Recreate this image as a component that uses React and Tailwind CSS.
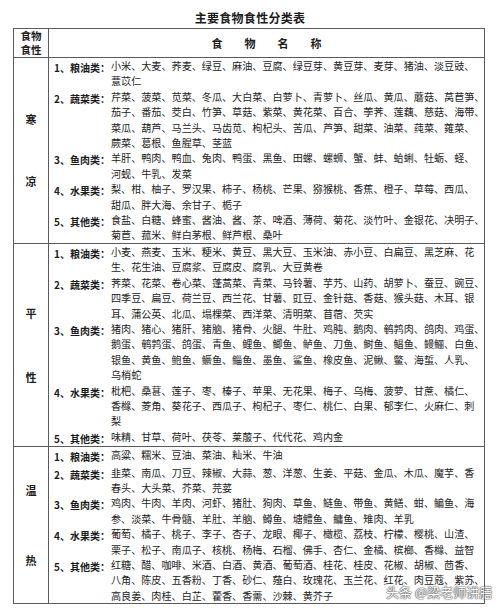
import React from 'react'

// 主要食物食性分类表 — table data, one entry per printed line
const sections = [
  {
    name: ['寒', '凉'],
    gap: 'gap-[46px]',
    groups: [
      { n: '1', label: '粮油类', lines: ['小米、大麦、荞麦、绿豆、麻油、豆腐、绿豆芽、黄豆芽、麦芽、猪油、淡豆豉、', '薏苡仁'] },
      {
        n: '2',
        label: '蔬菜类',
        lines: [
          '芹菜、菠菜、苋菜、冬瓜、大白菜、白萝卜、青萝卜、丝瓜、黄瓜、蘑菇、莴苣笋、',
          '茄子、番茄、茭白、竹笋、草菇、紫菜、黄花菜、百合、荸荠、莲藕、慈菇、海带、',
          '菜瓜、葫芦、马兰头、马齿苋、枸杞头、苦瓜、芦笋、甜菜、油菜、莼菜、蕹菜、',
          '蕨菜、葛根、鱼腥草、茎蓝',
        ],
      },
      { n: '3', label: '鱼肉类', lines: ['羊肝、鸭肉、鸭血、兔肉、鸭蛋、黑鱼、田螺、螺蛳、蟹、蚌、蛤蜊、牡蛎、蛏、', '河蚬、牛乳、发菜'] },
      { n: '4', label: '水果类', lines: ['梨、柑、柚子、罗汉果、柿子、杨桃、芒果、猕猴桃、香蕉、橙子、草莓、西瓜、', '甜瓜、胖大海、余甘子、栀子'] },
      { n: '5', label: '其他类', lines: ['食盐、白糖、蜂蜜、酱油、酱、茶、啤酒、薄荷、菊花、淡竹叶、金银花、决明子、', '菊苣、菰米、鲜白茅根、鲜芦根、桑叶'] },
    ],
  },
  {
    name: ['平', '性'],
    gap: 'gap-[47px]',
    groups: [
      { n: '1', label: '粮油类', lines: ['小麦、燕麦、玉米、粳米、黄豆、黑大豆、玉米油、赤小豆、白扁豆、黑芝麻、花', '生、花生油、豆腐浆、豆腐皮、腐乳、大豆黄卷'] },
      {
        n: '2',
        label: '蔬菜类',
        lines: [
          '荠菜、花菜、卷心菜、蓬蒿菜、青菜、马铃薯、芋艿、山药、胡萝卜、蚕豆、豌豆、',
          '四季豆、扁豆、荷兰豆、西兰花、甘薯、豇豆、金针菇、香菇、猴头菇、木耳、银',
          '耳、蒲公英、北瓜、塌棵菜、西洋菜、清明菜、苜蓿、芡实',
        ],
      },
      {
        n: '3',
        label: '鱼肉类',
        lines: [
          '猪肉、猪心、猪肝、猪脑、猪骨、火腿、牛肚、鸡肫、鹅肉、鹌鹑肉、鸽肉、鸡蛋、',
          '鹅蛋、鹌鹑蛋、鸽蛋、青鱼、鲤鱼、鲫鱼、鲈鱼、刀鱼、鲥鱼、鲳鱼、鳗鲡、白鱼、',
          '银鱼、黄鱼、鲍鱼、鳜鱼、鲻鱼、墨鱼、鲨鱼、橡皮鱼、泥鳅、鳖、海蜇、人乳、',
          '乌梢蛇',
        ],
      },
      {
        n: '4',
        label: '水果类',
        lines: [
          '枇杷、桑葚、莲子、枣、榛子、苹果、无花果、梅子、乌梅、菠萝、甘蔗、橘仁、',
          '香橼、菱角、葵花子、西瓜子、枸杞子、枣仁、桃仁、白果、郁李仁、火麻仁、刺',
          '梨',
        ],
      },
      { n: '5', label: '其他类', lines: ['味精、甘草、荷叶、茯苓、莱菔子、代代花、鸡内金'] },
    ],
  },
  {
    name: ['温', '热'],
    gap: 'gap-[54px]',
    groups: [
      { n: '1', label: '粮油类', lines: ['高粱、糯米、豆油、菜油、籼米、牛油'] },
      { n: '2', label: '蔬菜类', lines: ['韭菜、南瓜、刀豆、辣椒、大蒜、葱、洋葱、生姜、平菇、金瓜、木瓜、魔芋、香', '春头、大头菜、芥菜、芫荽'] },
      { n: '3', label: '鱼肉类', lines: ['鸡肉、牛肉、羊肉、河虾、猪肚、狗肉、草鱼、鲢鱼、带鱼、黄鳝、蚶、鳊鱼、海', '参、淡菜、牛骨髓、羊肚、羊脑、鳟鱼、塘鳢鱼、鳙鱼、雉肉、羊乳'] },
      { n: '4', label: '水果类', lines: ['葡萄、橘子、桃子、李子、杏子、龙眼、椰子、橄榄、荔枝、柠檬、樱桃、山渣、', '栗子、松子、南瓜子、核桃、杨梅、石榴、佛手、杏仁、金橘、槟榔、香橼、益智'] },
      {
        n: '5',
        label: '其他类',
        lines: [
          '红糖、醋、咖啡、米酒、白酒、黄酒、葡萄酒、桂花、桂皮、花椒、胡椒、茴香、',
          '八角、陈皮、五香粉、丁香、砂仁、薤白、玫瑰花、玉兰花、红花、肉豆蔻、紫苏、',
          '高良姜、肉桂、白芷、藿香、香薷、沙棘、黄芥子',
        ],
      },
    ],
  },
]

function Group({ group }) {
  return (
    <div className="flex">
      <div className="w-[57px] shrink-0">
        <span className="whitespace-nowrap text-[10px] font-bold">
          {group.n}、{group.label}：
        </span>
      </div>
      <div className="flex flex-col items-start text-[10.1px]">
        {group.lines.map((line, i) => (
          <span key={i} className="whitespace-nowrap">{line}</span>
        ))}
      </div>
    </div>
  )
}

export default function App() {
  return (
    <div className="relative w-[500px] h-[608px] bg-white text-[#1c1c1c] font-['Noto_Sans_CJK_SC',sans-serif] overflow-hidden">
      {/* Title */}
      <div className="pt-[9px] h-[28px] text-center text-[12px] font-bold tracking-[0.3px] leading-[18px]">
        主要食物食性分类表
      </div>

      {/* Table */}
      <div className="ml-[13px] w-[472px] border border-[#5a5a5a]">
        {/* Header */}
        <div className="flex h-[29px] border-b border-[#5a5a5a]">
          <div className="w-[35px] shrink-0 border-r border-[#5a5a5a] flex flex-col items-center justify-center text-[10.5px] leading-[14px] font-bold">
            <span>食物</span>
            <span>食性</span>
          </div>
          <div className="flex-1 flex items-center justify-center gap-[22px] text-[11px] font-bold">
            <span>食</span>
            <span>物</span>
            <span>名</span>
            <span>称</span>
          </div>
        </div>

        {/* Sections */}
        {sections.map((sec, si) => (
          <div key={si} className={`flex ${si < sections.length - 1 ? 'border-b border-[#5a5a5a]' : ''}`}>
            <div className={`w-[35px] shrink-0 border-r border-[#5a5a5a] flex flex-col items-center justify-center ${sec.gap} text-[11px] font-bold`}>
              <span>{sec.name[0]}</span>
              <span>{sec.name[1]}</span>
            </div>
            <div className="flex-1 pl-[5px] flex flex-col leading-[15.4px]">
              {sec.groups.map((g, gi) => (
                <Group key={gi} group={g} />
              ))}
            </div>
          </div>
        ))}
      </div>

      {/* Watermark */}
      <div className="absolute left-[386px] top-[585px] whitespace-nowrap text-[13px] leading-[13px] text-white [text-shadow:0_0_1px_#444,0_0_1px_#444,0_0_2px_#777]">
        头条 @梁老师讲膳
      </div>
    </div>
  )
}
